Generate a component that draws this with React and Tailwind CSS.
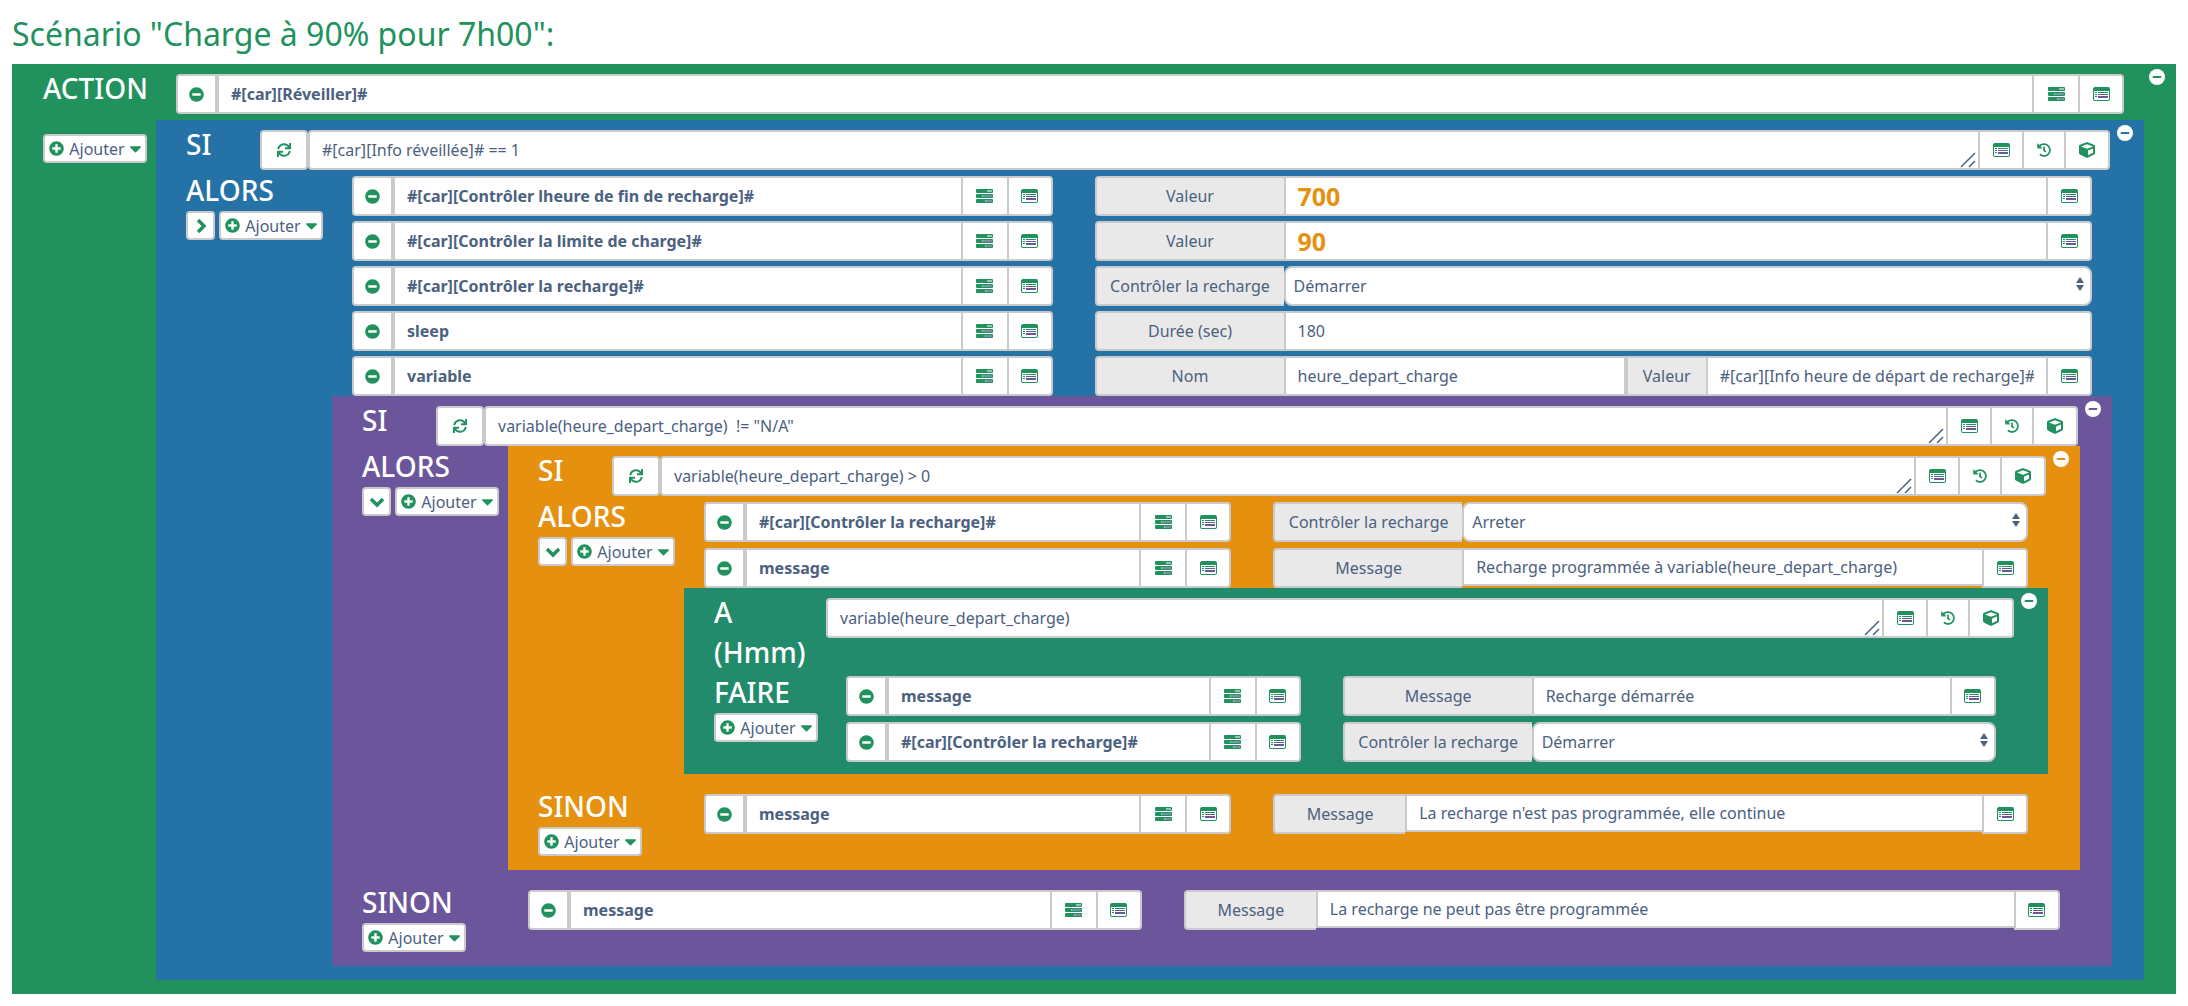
import { useId } from 'react';
import { FaCaretDown, FaCube, FaHistory, FaMinus, FaMinusCircle, FaPlusCircle, FaSync } from 'react-icons/fa';
import clsx from 'clsx';

const TasksIcon = () => (
  <svg width="17" height="14" viewBox="0 0 17 14" fill="currentColor" aria-hidden="true">
    <path fillRule="evenodd" d="M1 0h15a1 1 0 0 1 1 1v2a1 1 0 0 1-1 1H1a1 1 0 0 1-1-1V1a1 1 0 0 1 1-1zm10 1.500v1h5v-1zM1 5h15a1 1 0 0 1 1 1v2a1 1 0 0 1-1 1H1a1 1 0 0 1-1-1V6a1 1 0 0 1 1-1zm5 1.500v1h10v-1zM1 10h15a1 1 0 0 1 1 1v2a1 1 0 0 1-1 1H1a1 1 0 0 1-1-1v-2a1 1 0 0 1 1-1zm8 1.500v1h7v-1z" />
    <path d="M7 6h9v2H7zM10 11h6v2h-6z" fill="#6b569c" opacity="0.5" />
  </svg>
);

const ListAltIcon = () => (
  <svg width="17" height="14" viewBox="0 0 17 14" fill="currentColor" aria-hidden="true">
    <path fillRule="evenodd" d="M2 0h13a2 2 0 0 1 2 2v10a2 2 0 0 1-2 2H2a2 2 0 0 1-2-2V2a2 2 0 0 1 2-2zM1 4v8a1 1 0 0 0 1 1h13a1 1 0 0 0 1-1V4z" />
    <path d="M2 5h2v1H2zM2 7h2v1H2zM2 9h2v1H2zM5 5h10v1H5z" />
    <path d="M5 7h10v1H5zM5 9h10v2H5z" fill="#6b569c" />
  </svg>
);

const Chevron = ({ right }) => (
  <svg width="14" height="14" viewBox="0 0 14 14" fill="none" stroke="currentColor" strokeWidth="3.500" aria-hidden="true">
    <path d={right ? 'M4 1l6 6-6 6' : 'M1 4l6 6 6-6'} />
  </svg>
);

function IconButton({ label, className, children }) {
  return (
    <button type="button" aria-label={label} className={clsx('flex h-10 shrink-0 items-center justify-center border-2 border-[#cacaca] bg-white text-[#21915d]', className)}>
      {children}
    </button>
  );
}

function AddButton() {
  return (
    <button type="button" className="flex h-[29px] w-[104px] shrink-0 items-center justify-center gap-[5px] rounded border-2 border-[#cacaca] bg-white text-[16px] text-[#4b6180]">
      <FaPlusCircle size={15} className="shrink-0 text-[#21915d]" />
      Ajouter
      <FaCaretDown size={19} className="-mx-1 shrink-0 text-[#21915d]" />
    </button>
  );
}

function Command({ value }) {
  return (
    <div className="flex min-w-0 flex-1">
      <IconButton label="Supprimer" className="w-[43px] rounded-l border-r-4"><FaMinusCircle size={15} /></IconButton>
      <input aria-label="Commande" defaultValue={value} className="h-10 min-w-0 flex-1 border-y-2 border-[#cacaca] bg-white px-3 text-[16px] font-bold outline-none" />
      <IconButton label="Options" className="w-[46px] border-r-0"><TasksIcon /></IconButton>
      <IconButton label="Choisir une commande" className="w-[46px] rounded-r"><ListAltIcon /></IconButton>
    </div>
  );
}

function Field({ label, value, select, big, short, narrow, picker, first = true }) {
  const id = useId();
  return (
    <div className="flex min-w-0 flex-auto">
      <label
        htmlFor={id}
        className={clsx(
          'flex h-10 shrink-0 items-center justify-center border-2 border-r-0 border-[#cacaca] bg-[#e9e9e9] text-[16px]',
          first ? 'rounded-l' : 'border-l-4',
          !first ? 'w-[82px]' : narrow ? 'w-[132px]' : 'w-[189px]'
        )}
      >
        {label}
      </label>
      {select ? (
        <div className="relative flex-1">
          <select id={id} defaultValue={value} className="h-10 w-full appearance-none rounded-lg border-2 border-[#cacaca] bg-white px-2 text-[16px] outline-none">
            <option>Démarrer</option>
            <option>Arreter</option>
          </select>
          <svg className="pointer-events-none absolute top-[11px] right-2" width="8" height="14" viewBox="0 0 8 14" fill="currentColor" aria-hidden="true">
            <path d="M4 0l4 6H0zM4 14L0 8h8z" />
          </svg>
        </div>
      ) : (
        <input
          id={id}
          defaultValue={value}
          className={clsx(
            'min-w-0 flex-1 border-2 border-[#cacaca] bg-white px-3 outline-none',
            short ? 'h-[38px]' : 'h-10',
            big ? 'text-[25px] font-bold text-[#e5910f]' : 'text-[16px]',
            picker === 'end' ? 'rounded-r' : 'border-r-0'
          )}
        />
      )}
      {picker === true && <IconButton label="Choisir une commande" className="w-[46px] rounded-r"><ListAltIcon /></IconButton>}
    </div>
  );
}

function Rows({ rows, gap = 'gap-1.5', className }) {
  return (
    <div className={clsx('flex flex-col px-5', gap, className)}>
      {rows.map((row, i) => (
        <div key={i} className="grid grid-cols-12 gap-x-[42px]">
          <div className="col-span-5 flex"><Command value={row.cmd} /></div>
          <div className="col-span-7 flex">
            {row.fields.map((field, j) => <Field key={j} first={j === 0} {...field} />)}
          </div>
        </div>
      ))}
    </div>
  );
}

function Condition({ value, loop }) {
  return (
    <div className="mt-1.5 mr-0.5 flex min-w-0 flex-1">
      {!loop && <IconButton label="Répéter" className="w-12 rounded"><FaSync size={14} /></IconButton>}
      <div className="relative flex min-w-0 flex-1">
        <textarea
          aria-label="Expression"
          rows={1}
          defaultValue={value}
          className="h-10 min-w-0 flex-1 resize-none overflow-hidden rounded-l border-2 border-r-0 border-[#cacaca] bg-white px-3 py-1.5 text-[16px] leading-6 outline-none"
        />
        <svg className="pointer-events-none absolute right-0.5 bottom-0.5" width="16" height="16" viewBox="0 0 16 16" stroke="currentColor" strokeWidth="1.500" aria-hidden="true">
          <path d="M1 15L15 1M9 15l6-6" />
        </svg>
      </div>
      <IconButton label="Choisir une commande" className="w-[44px] border-r-0"><ListAltIcon /></IconButton>
      <IconButton label="Historique" className="w-[42px] border-r-0"><FaHistory size={14} /></IconButton>
      <IconButton label="Bloc" className="w-[46px] rounded-r"><FaCube size={16} /></IconButton>
    </div>
  );
}

function Block({ color, minus, className, children }) {
  return (
    <section className={clsx('relative pt-1 pr-8 text-[#4b6180]', color, className)}>
      <button type="button" aria-label="Supprimer le bloc" className={clsx('absolute top-[5px] right-[11px] flex size-4 items-center justify-center rounded-full bg-white', minus)}>
        <FaMinus size={10} />
      </button>
      {children}
    </section>
  );
}

// SI / A header line, a loop has no repeat button and a wider label
function Header({ label, value, loop }) {
  return (
    <div className="flex items-start">
      <h2 className={clsx('shrink-0 pl-[30px] text-[28px] leading-10 font-medium text-white', loop ? 'w-[142px]' : 'w-[104px]')}>{label}</h2>
      <Condition value={value} loop={loop} />
    </div>
  );
}

function Part({ label, toggle, loop, className, children }) {
  return (
    <div className={clsx('flex', className)}>
      <div className={clsx('shrink-0 pl-[30px]', loop ? 'w-[142px]' : 'w-44')}>
        <h3 className="text-[28px] leading-10 font-medium text-white">{label}</h3>
        <div className="mt-px flex gap-1">
          {toggle && (
            <button type="button" aria-label="Replier" className="flex h-[29px] w-[29px] items-center justify-center rounded border-2 border-[#cacaca] bg-white text-[#21915d]">
              <Chevron right={toggle === 'right'} />
            </button>
          )}
          <AddButton />
        </div>
      </div>
      <div className="min-w-0 flex-1">{children}</div>
    </div>
  );
}

const message = 'message';
const recharge = '#[car][Contrôler la recharge]#';

const setupRows = [
  { cmd: '#[car][Contrôler lheure de fin de recharge]#', fields: [{ label: 'Valeur', value: '700', big: true, picker: true }] },
  { cmd: '#[car][Contrôler la limite de charge]#', fields: [{ label: 'Valeur', value: '90', big: true, picker: true }] },
  { cmd: recharge, fields: [{ label: 'Contrôler la recharge', value: 'Démarrer', select: true }] },
  { cmd: 'sleep', fields: [{ label: 'Durée (sec)', value: '180', picker: 'end' }] },
  {
    cmd: 'variable',
    fields: [
      { label: 'Nom', value: 'heure_depart_charge' },
      { label: 'Valeur', value: '#[car][Info heure de départ de recharge]#', picker: true },
    ],
  },
];

const stopRows = [
  { cmd: recharge, fields: [{ label: 'Contrôler la recharge', value: 'Arreter', select: true }] },
  { cmd: message, fields: [{ label: 'Message', value: 'Recharge programmée à variable(heure_depart_charge)', short: true, picker: true }] },
];

const startRows = [
  { cmd: message, fields: [{ label: 'Message', value: 'Recharge démarrée', picker: true }] },
  { cmd: recharge, fields: [{ label: 'Contrôler la recharge', value: 'Démarrer', select: true }] },
];

const continueRows = [
  { cmd: message, fields: [{ label: 'Message', value: "La recharge n'est pas programmée, elle continue", short: true, narrow: true, picker: true }] },
];

const failedRows = [
  { cmd: message, fields: [{ label: 'Message', value: 'La recharge ne peut pas être programmée', short: true, narrow: true, picker: true }] },
];

export default function App() {
  return (
    <main className="min-h-screen bg-white px-3 pt-3 pb-3 font-['Noto_Sans',sans-serif]">
      <h1 className="mb-2 text-[32px] leading-11 text-[#21915d]">Scénario "Charge à 90% pour 7h00":</h1>

      <Block color="bg-[#21915d]" minus="text-[#21915d]" className="pb-3.5">
        <div className="flex">
          <div className="w-36 shrink-0 pl-[31px]">
            <h2 className="mb-[26px] text-[28px] leading-10 font-medium text-white">ACTION</h2>
            <AddButton />
          </div>
          <div className="min-w-0 flex-1">
            <div className="mx-5 my-1.5 flex"><Command value="#[car][Réveiller]#" /></div>

            <Block color="bg-[#2472a6]" minus="text-[#2472a6]" className="pb-3.5">
              <Header label="SI" value="#[car][Info réveillée]# == 1" />
              <Part label="ALORS" toggle="right">
                <Rows rows={setupRows} gap="gap-[5px]" className="pt-1.5" />

                <Block color="bg-[#6b569c]" minus="text-[#6b569c]" className="pb-3.5">
                  <Header label="SI" value={'variable(heure_depart_charge)  != "N/A"'} />
                  <Part label="ALORS" toggle="down">
                    <Block color="bg-[#e5910f]" minus="text-[#e5910f]" className="pb-3.5">
                      <Header label="SI" value="variable(heure_depart_charge) > 0" />
                      <Part label="ALORS" toggle="down">
                        <Rows rows={stopRows} className="pt-1.5" />

                        <Block color="bg-[#228b6b]" minus="text-[#228b6b]" className="pb-3">
                          <Header label={<>A<br />(Hmm)</>} value="variable(heure_depart_charge)" loop />
                          <Part label="FAIRE" loop>
                            <Rows rows={startRows} className="pt-1" />
                          </Part>
                        </Block>
                      </Part>
                      <Part label="SINON" className="pt-3">
                        <Rows rows={continueRows} className="pt-2" />
                      </Part>
                    </Block>
                  </Part>
                  <Part label="SINON" className="pt-3">
                    <Rows rows={failedRows} className="pt-2" />
                  </Part>
                </Block>
              </Part>
            </Block>
          </div>
        </div>
      </Block>
    </main>
  );
}
